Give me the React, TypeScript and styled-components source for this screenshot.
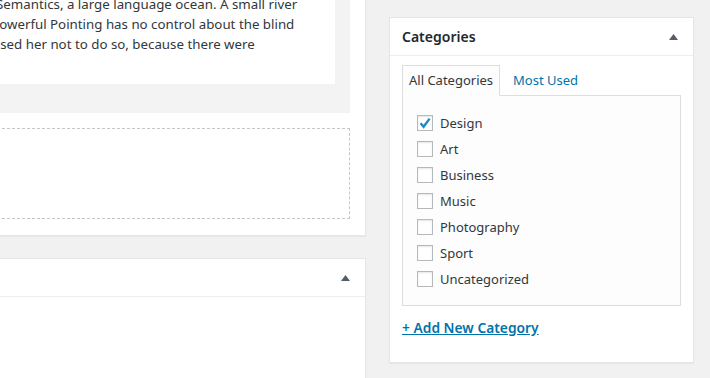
import styled, { createGlobalStyle } from 'styled-components'

const GlobalStyle = createGlobalStyle`
	body {
		margin: 0;
		background: #f1f1f1;
		font-family: 'Noto Sans', 'Open Sans', sans-serif;
		color: #32373c;
		overflow: hidden;
	}
`

const EDITOR_LINES = [
	{ text: 'Semantics, a large language ocean. A small river', shift: -3 },
	{ text: 'powerful Pointing has no control about the blind', shift: -8 },
	{ text: 'used her not to do so, because there were', shift: -7 },
]

const CATEGORIES = [
	{ name: 'Design', checked: true },
	{ name: 'Art', checked: false },
	{ name: 'Business', checked: false },
	{ name: 'Music', checked: false },
	{ name: 'Photography', checked: false },
	{ name: 'Sport', checked: false },
	{ name: 'Uncategorized', checked: false },
]

function ToggleArrow() {
	return (
		<svg width="9" height="6" viewBox="0 0 9 6">
			<polygon points="0,6 4.5,0 9,6" fill="#555d66" />
		</svg>
	)
}

function CheckBox({ checked }: { checked: boolean }) {
	return (
		<Box>
			{checked && (
				<svg width="16" height="16" viewBox="0 0 16 16">
					<path d="M3.6 8.2 L6.6 11.8 L12.6 3.6" fill="none" stroke="#1e8cbe" strokeWidth="2.4" />
				</svg>
			)}
		</Box>
	)
}

export default function App() {
	return (
		<>
			<GlobalStyle />
			<Page>
				<MainColumn>
					<Panel>
						<EditorWrap>
							<EditorText>
								{EDITOR_LINES.map((line) => (
									<EditorLine key={line.text} $shift={line.shift}>
										{line.text}
									</EditorLine>
								))}
							</EditorText>
						</EditorWrap>
						<DropZone />
					</Panel>
					<Panel $open>
						<PanelHeader>
							<span />
							<ToggleArrow />
						</PanelHeader>
						<PanelBody />
					</Panel>
				</MainColumn>

				<Sidebar>
					<PanelHeader>
						<Title>Categories</Title>
						<ToggleArrow />
					</PanelHeader>
					<SidebarBody>
						<Tabs>
							<Tab $active>All Categories</Tab>
							<Tab>Most Used</Tab>
						</Tabs>
						<TabPanel>
							{CATEGORIES.map((cat) => (
								<Row key={cat.name}>
									<CheckBox checked={cat.checked} />
									<Label>{cat.name}</Label>
								</Row>
							))}
						</TabPanel>
						<AddLink href="#">+ Add New Category</AddLink>
					</SidebarBody>
				</Sidebar>
			</Page>
		</>
	)
}

const Page = styled.div`
	display: flex;
	align-items: flex-start;
	gap: 23px;
	width: 710px;
	height: 378px;
	padding-top: 17px;
	box-sizing: border-box;
	overflow: hidden;
`

const MainColumn = styled.div`
	flex: 0 0 601px;
	margin-left: -235px;
	margin-top: -45px;
	display: flex;
	flex-direction: column;
	gap: 22px;
`

const Panel = styled.div<{ $open?: boolean }>`
	background: #fff;
	border: 1px solid #e5e5e5;
	box-shadow: 0 1px 1px rgba(0, 0, 0, 0.04);
	padding: ${({ $open }) => ($open ? '0' : '0 15px 16px 16px')};
`

const EditorWrap = styled.div`
	background: #f3f3f3;
	padding: 0 15px 29px 0;
`

const EditorText = styled.div`
	background: #fff;
	padding: 21px 0 30px 217px;
	font-size: 13.3px;
	line-height: 20px;
	color: #32373c;
`

const EditorLine = styled.div<{ $shift: number }>`
	white-space: nowrap;
	margin-left: ${({ $shift }) => $shift}px;
`

const DropZone = styled.div`
	margin-top: 15px;
	height: 89px;
	border: 1px dashed #c4c7ca;
`

const PanelHeader = styled.div`
	display: flex;
	align-items: center;
	justify-content: space-between;
	height: 37px;
	padding: 0 15px 0 12px;
	border-bottom: 1px solid #eee;
`

const PanelBody = styled.div`
	height: 120px;
`

const Sidebar = styled.div`
	flex: 0 0 305px;
	box-sizing: border-box;
	background: #fff;
	border: 1px solid #e5e5e5;
	box-shadow: 0 1px 1px rgba(0, 0, 0, 0.04);
`

const Title = styled.h2`
	margin: 0;
	font-size: 14px;
	font-weight: 600;
	color: #23282d;
`

const SidebarBody = styled.div`
	padding: 9px 12px 24px 12px;
`

const Tabs = styled.div`
	display: flex;
	gap: 6px;
	margin-bottom: -1px;
`

const Tab = styled.div<{ $active?: boolean }>`
	height: 29px;
	line-height: 29px;
	padding: 0 6px;
	font-size: 13px;
	color: ${({ $active }) => ($active ? '#32373c' : '#0073aa')};
	background: ${({ $active }) => ($active ? '#fdfdfd' : 'transparent')};
	border: 1px solid ${({ $active }) => ($active ? '#ddd' : 'transparent')};
	border-bottom-color: ${({ $active }) => ($active ? '#fdfdfd' : 'transparent')};
	position: relative;
	z-index: 1;
`

const TabPanel = styled.div`
	border: 1px solid #ddd;
	background: #fdfdfd;
	padding: 14px 14px 13px;
	width: 249px;
`

const Row = styled.div`
	display: flex;
	align-items: center;
	gap: 7px;
	height: 26px;
`

const Box = styled.span`
	width: 16px;
	height: 16px;
	box-sizing: border-box;
	border: 1px solid #b4b9be;
	background: #fff;
	box-shadow: inset 0 1px 2px rgba(0, 0, 0, 0.1);
	display: flex;
	align-items: center;
	justify-content: center;

	svg {
		flex: none;
	}
`

const Label = styled.span`
	font-size: 13px;
	color: #32373c;
	line-height: 20px;
`

const AddLink = styled.a`
	display: inline-block;
	margin-top: 12px;
	font-size: 13.8px;
	font-weight: 600;
	line-height: 20px;
	color: #0073aa;
	text-decoration: underline;
`
